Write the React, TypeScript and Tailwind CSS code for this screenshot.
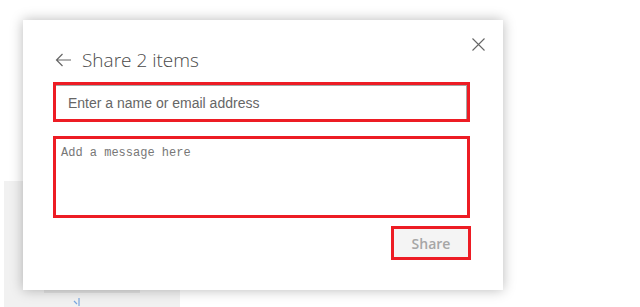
import { useState } from 'react'

function BackArrow() {
  return (
    <svg width="17" height="14" viewBox="0 0 17 14" fill="none" className="shrink-0">
      <path d="M16 7H1.5M7.5 1L1.5 7L7.5 13" stroke="#666" strokeWidth="1.2" />
    </svg>
  )
}

function CloseIcon() {
  return (
    <svg width="13" height="13" viewBox="0 0 13 13" fill="none">
      <path d="M0.5 0.5L12.5 12.5M12.5 0.5L0.5 12.5" stroke="#666" strokeWidth="1.1" />
    </svg>
  )
}

function ShareDialog() {
  const [to, setTo] = useState('')
  const [message, setMessage] = useState('')

  return (
    <div className="absolute left-[23px] top-[20px] h-[270px] w-[480px] bg-white pl-[30px] shadow-[0_0_12px_rgba(0,0,0,0.28)]">
      <button className="absolute right-[18px] top-[18px] flex h-[13px] w-[13px] items-center justify-center">
        <CloseIcon />
      </button>

      <div className="mt-[26px] flex h-[28px] items-center gap-[10px] pl-[2px]">
        <BackArrow />
        <h2 className="font-['Open_Sans',sans-serif] text-[19px] leading-[28px] font-light text-[#4a4a4a]">
          Share 2 items
        </h2>
      </div>

      <div className="mt-[8px] h-[40px] w-[417px] border-[3px] border-[#ed1c24]">
        <input
          value={to}
          onChange={e => setTo(e.target.value)}
          placeholder="Enter a name or email address"
          className="h-full w-full border-t border-r border-[#a6a6a6] bg-white pl-[12px] font-['Liberation_Sans',Arial,sans-serif] text-[14px] text-[#333] outline-none placeholder:text-[#666]"
        />
      </div>

      <div className="mt-[14px] h-[82px] w-[417px] border-[3px] border-[#ed1c24]">
        <textarea
          value={message}
          onChange={e => setMessage(e.target.value)}
          placeholder="Add a message here"
          className="h-full w-full resize-none bg-white px-[5px] pt-[6px] font-['Liberation_Mono',monospace] text-[12px] leading-[16px] text-[#333] outline-none placeholder:text-[#777]"
        />
      </div>

      <div className="mt-[8px] flex w-[418px] justify-end">
        <button className="flex h-[34px] w-[80px] items-center justify-center border-[3px] border-[#ed1c24] bg-[#f4f4f4] font-['Open_Sans',sans-serif] text-[14px] font-semibold text-[#a6a6a6]">
          Share
        </button>
      </div>
    </div>
  )
}

export default function App() {
  return (
    <div className="relative h-[307px] w-[640px] overflow-hidden bg-white">
      <div className="ml-[4px] mt-[181px] flex h-[126px] w-[176px] flex-col items-start bg-[#f1f1f1]">
        <div className="ml-[40px] mt-[86px] h-[26px] w-[96px] bg-[#e2e2e2]" />
        <svg width="8" height="9" viewBox="0 0 8 9" className="ml-[69px] mt-[5px]">
          <path d="M1 3L4 6M6 0V8" stroke="#7aa7e0" strokeWidth="1.2" fill="none" />
        </svg>
      </div>
      <ShareDialog />
    </div>
  )
}
